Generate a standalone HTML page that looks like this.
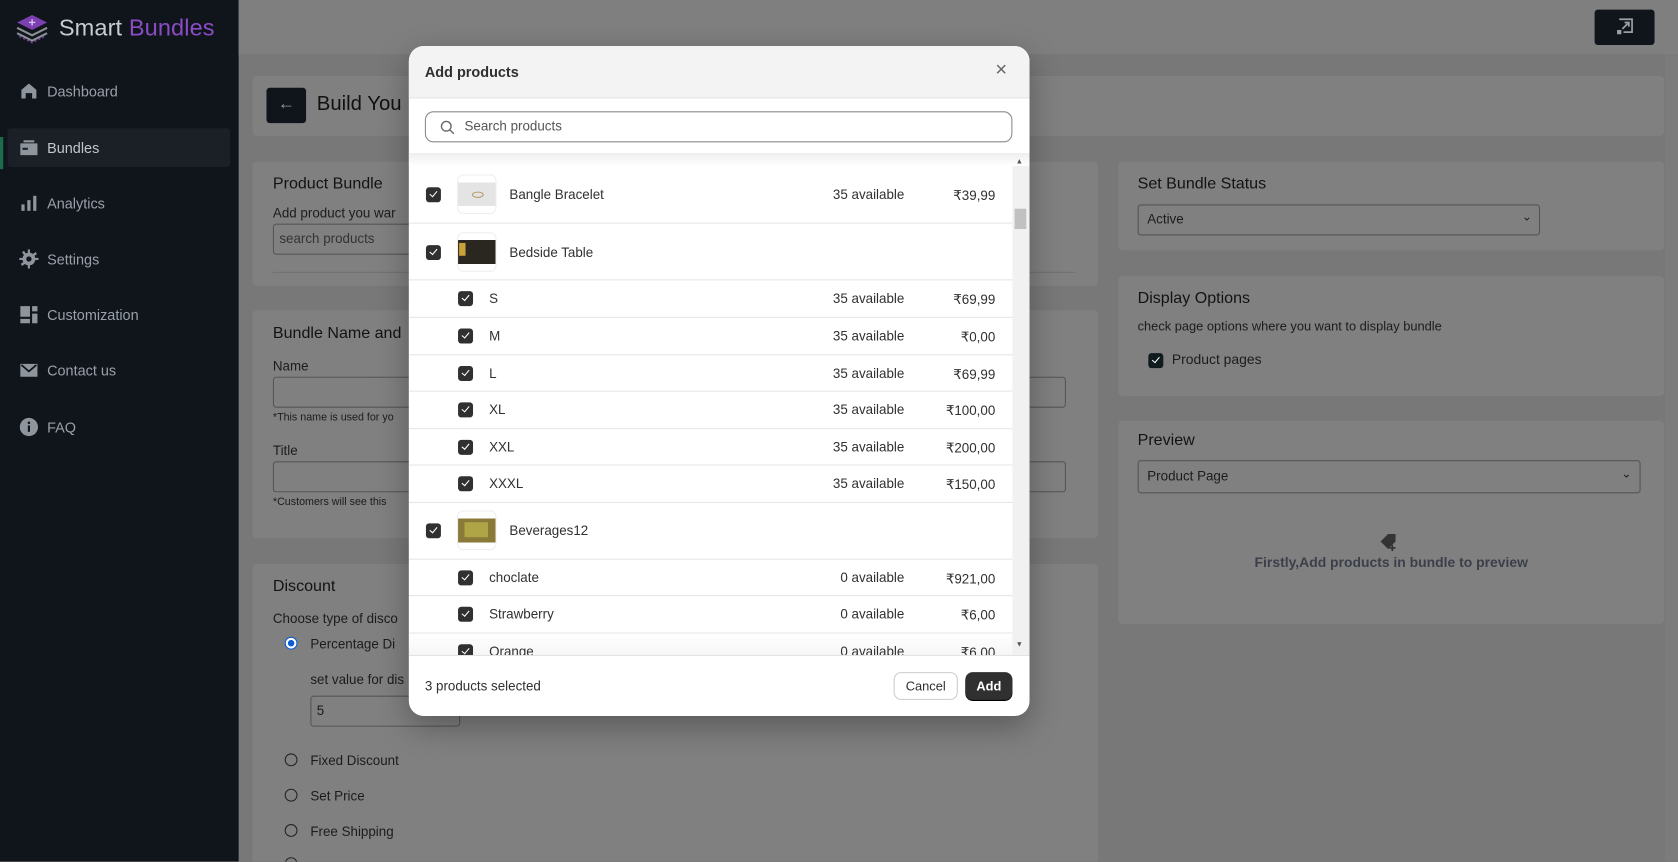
<!DOCTYPE html>
<html><head><meta charset="utf-8"><style>
*{box-sizing:border-box;margin:0;padding:0}
html,body{width:1678px;height:862px;overflow:hidden;background:#787878;font-family:"Liberation Sans",sans-serif}
#w{position:absolute;left:0;top:0;width:1568px;height:805px;overflow:hidden;transform:scale(1.0702);transform-origin:0 0}
.a{position:absolute}
.side{left:0;top:0;width:223px;height:805px;background:#10151c}
.mi{position:absolute;left:18px;color:#9aa0a8;font-size:13.5px;display:flex;align-items:center;gap:8px}
.mi svg{width:18px;height:18px;fill:#8f959c}
.card{position:absolute;background:#808080;border-radius:4px}
.h{position:absolute;color:#131313;font-size:15px}
.t{position:absolute;color:#1c1c1c;font-size:12.5px}
.inp{position:absolute;border:1px solid #555;border-radius:3px}
.modal{left:382px;top:43px;width:580px;height:626px;background:#fff;border-radius:14px;overflow:hidden;box-shadow:0 10px 30px rgba(0,0,0,.3)}
.row{position:absolute;left:0;width:564px;border-bottom:1px solid #e6e6e6;font-size:12.5px;color:#303030}
.cb{position:absolute;width:14px;height:14px;background:#303030;border-radius:3px}
.cb:after{content:"";position:absolute;left:4.5px;top:2px;width:3px;height:6px;border:solid #fff;border-width:0 1.5px 1.5px 0;transform:rotate(40deg)}
.av{position:absolute;right:101px;text-align:right}
.pr{position:absolute;right:16px;text-align:right}
.th{position:absolute;left:45px;width:37px;height:37px;border:1px solid #eee;border-radius:6px;overflow:hidden}
.nm{position:absolute}
.radio{position:absolute;width:12px;height:12px;border:1px solid #222;border-radius:50%}
</style></head><body><div id="w">
<div class="a side"></div>
<svg class="a" style="left:13px;top:12px" width="34" height="30" viewBox="0 0 34 30"><path d="M17 2L31 9 17 16 3 9Z" fill="#7b3fb0"/><path d="M17 6v6M14 9h6" stroke="#d9c3ee" stroke-width="1.3"/><path d="M3 14l14 7 14-7M3 19l14 7 14-7" stroke="#8a8f96" stroke-width="2" fill="none"/><path d="M5 22l12 6 12-6" stroke="#7b3fb0" stroke-width="1.2" stroke-dasharray="2 2" fill="none"/></svg>
<div class="a" style="left:55px;top:13px;font-size:22px;color:#c8ccd0;letter-spacing:.1px">Smart <span style="color:#8a4cc4">Bundles</span></div>
<div class="a" style="left:7px;top:120px;width:208px;height:36px;background:#1b2026;border-radius:3px"></div>
<div class="a" style="left:0;top:128px;width:3px;height:30px;background:#1e6b4a"></div>
<div class="mi" style="top:76px"><svg viewBox="0 0 18 18"><path d="M2 8L9 2l7 6v8h-4v-5H6v5H2z"/></svg>Dashboard</div>
<div class="mi" style="top:129px"><svg viewBox="0 0 18 18"><path d="M4 2h10v2H4zM1 5h16v11H1zM3 9h5v2H3z" fill-rule="evenodd"/></svg><span style="color:#c2c6cb">Bundles</span></div>
<div class="mi" style="top:181px"><svg viewBox="0 0 18 18"><rect x="2" y="10" width="3" height="6"/><rect x="7.5" y="6" width="3" height="10"/><rect x="13" y="2" width="3" height="14"/></svg>Analytics</div>
<div class="mi" style="top:233px"><svg viewBox="0 0 18 18"><circle cx="9" cy="9" r="6"/><path d="M8 0h2v4H8zM8 14h2v4H8zM0 8h4v2H0zM14 8h4v2h-4zM2.5 2.5l2-1 2 3-2 1zM13.5 13.5l-2 1-2-3 2-1zM2.5 15.5l-1-2 3-2 1 2zM15.5 2.5l1 2-3 2-1-2z"/><circle cx="9" cy="9" r="2.5" fill="#10151c"/></svg>Settings</div>
<div class="mi" style="top:285px"><svg viewBox="0 0 18 18"><path d="M1 1h9v10H1zM12 1h5v5h-5zM12 8h5v9h-5zM1 13h9v4H1z"/></svg>Customization</div>
<div class="mi" style="top:337px"><svg viewBox="0 0 18 18"><path d="M1 3h16v12H1z"/><path d="M2 4l7 6 7-6" stroke="#10151c" stroke-width="1.6" fill="none"/></svg>Contact us</div>
<div class="mi" style="top:390px"><svg viewBox="0 0 18 18"><circle cx="9" cy="9" r="8.5"/><rect x="8" y="7.5" width="2" height="6" fill="#10151c"/><circle cx="9" cy="5" r="1.2" fill="#10151c"/></svg>FAQ</div>

<div class="a" style="left:223px;top:0;width:1345px;height:52px;background:#7f7f7f;border-bottom:1px solid #767676"></div>
<div class="a" style="left:1490px;top:9px;width:56px;height:33px;background:#10151c;border-radius:3px"></div>
<svg class="a" style="left:1509px;top:16px" width="18" height="18" viewBox="0 0 18 18"><path d="M4 2h12v12H8" stroke="#9aa0a6" stroke-width="1.6" fill="none"/><path d="M7 11l6-6M9 5h4v4" stroke="#9aa0a6" stroke-width="1.6" fill="none"/><rect x="2" y="12" width="4" height="4" fill="#9aa0a6"/></svg>
<div class="a" style="left:1556px;top:52px;width:12px;height:753px;background:#7c7c7c"></div>

<div class="card" style="left:236px;top:71px;width:1319px;height:56px"></div>
<div class="a" style="left:249px;top:82px;width:37px;height:33px;background:#10151c;border-radius:3px;color:#999;font-size:16px;text-align:center;line-height:31px">←</div>
<div class="a" style="left:296px;top:87px;font-size:19px;color:#111">Build You</div>

<div class="card" style="left:236px;top:151px;width:790px;height:116px"></div>
<div class="h" style="left:255px;top:163px">Product Bundle</div>
<div class="t" style="left:255px;top:192px">Add product you war</div>
<div class="inp" style="left:255px;top:209px;width:200px;height:29px"></div>
<div class="t" style="left:261px;top:216px;color:#333">search products</div>
<div class="a" style="left:255px;top:254px;width:750px;height:1px;background:#707070"></div>

<div class="card" style="left:236px;top:290px;width:790px;height:213px"></div>
<div class="h" style="left:255px;top:303px">Bundle Name and</div>
<div class="t" style="left:255px;top:335px">Name</div>
<div class="inp" style="left:255px;top:352px;width:741px;height:29px"></div>
<div class="t" style="left:255px;top:385px;font-size:10px">*This name is used for yo</div>
<div class="t" style="left:255px;top:414px">Title</div>
<div class="inp" style="left:255px;top:431px;width:741px;height:29px"></div>
<div class="t" style="left:255px;top:464px;font-size:10px">*Customers will see this</div>

<div class="card" style="left:236px;top:527px;width:790px;height:300px"></div>
<div class="h" style="left:255px;top:539px">Discount</div>
<div class="t" style="left:255px;top:571px">Choose type of disco</div>
<div class="radio" style="left:266px;top:595px;border-color:#0b5cd6;background:radial-gradient(#0b5cd6 40%,#fff 45%)"></div>
<div class="t" style="left:290px;top:595px">Percentage Di</div>
<div class="t" style="left:290px;top:628px">set value for dis</div>
<div class="inp" style="left:290px;top:650px;width:140px;height:29px"></div>
<div class="t" style="left:296px;top:657px">5</div>
<div class="radio" style="left:266px;top:704px"></div><div class="t" style="left:290px;top:704px">Fixed Discount</div>
<div class="radio" style="left:266px;top:737px"></div><div class="t" style="left:290px;top:737px">Set Price</div>
<div class="radio" style="left:266px;top:770px"></div><div class="t" style="left:290px;top:770px">Free Shipping</div>
<div class="radio" style="left:266px;top:801px"></div>

<div class="card" style="left:1045px;top:151px;width:510px;height:83px"></div>
<div class="h" style="left:1063px;top:163px">Set Bundle Status</div>
<div class="inp" style="left:1063px;top:191px;width:376px;height:29px"></div>
<div class="t" style="left:1072px;top:198px">Active</div>
<div class="t" style="left:1422px;top:196px;font-size:11px">⌄</div>
<div class="card" style="left:1045px;top:258px;width:510px;height:112px"></div>
<div class="h" style="left:1063px;top:270px">Display Options</div>
<div class="t" style="left:1063px;top:298px;font-size:12px">check page options where you want to display bundle</div>
<div class="cb" style="left:1073px;top:330px;background:#0f1b1c"></div>
<div class="t" style="left:1095px;top:328px;font-size:13px">Product pages</div>
<div class="card" style="left:1045px;top:393px;width:510px;height:190px"></div>
<div class="h" style="left:1063px;top:403px">Preview</div>
<div class="inp" style="left:1063px;top:430px;width:470px;height:31px"></div>
<div class="t" style="left:1072px;top:438px">Product Page</div>
<div class="t" style="left:1515px;top:436px;font-size:11px">⌄</div>
<svg class="a" style="left:1288px;top:498px" width="20" height="18" viewBox="0 0 20 18"><path d="M2 8l7-7h7v7l-7 7z" fill="#333"/><path d="M13 11v6M10 14h6" stroke="#333" stroke-width="1.6"/></svg>
<div class="a" style="left:1045px;top:518px;width:510px;text-align:center;font-size:13px;font-weight:bold;color:#3a3f4a">Firstly,Add products in bundle to preview</div>

<div class="a modal">
 <div class="a" style="left:0;top:0;width:580px;height:49px;background:#f3f3f3;border-bottom:1px solid #e3e3e3"></div>
 <div class="a" style="left:15px;top:17px;font-size:13.5px;font-weight:bold;color:#303030">Add products</div>
 <div class="a" style="left:548px;top:12px;font-size:19px;color:#666">×</div>
 <div class="a" style="left:15px;top:61px;width:549px;height:29px;border:1px solid #8a8a8a;border-radius:8px"></div>
 <svg class="a" style="left:29px;top:69px" width="14" height="14" viewBox="0 0 14 14"><circle cx="6" cy="6" r="4.5" stroke="#666" stroke-width="1.3" fill="none"/><path d="M9.5 9.5L13 13" stroke="#666" stroke-width="1.3"/></svg>
 <div class="a" style="left:52px;top:68px;font-size:12.5px;color:#555">Search products</div>
 <div class="a" style="left:0;top:100px;width:580px;height:12px;background:linear-gradient(#eee,#fff)"></div>
 <div class="a" style="left:564px;top:112px;width:16px;height:457px;background:#f1f1f1"></div>
 <div class="a" style="left:566px;top:152px;width:11px;height:19px;background:#c1c1c1"></div>
 <div class="a" style="left:567px;top:105px;font-size:7px;color:#555">▲</div>
 <div class="a" style="left:567px;top:556px;font-size:7px;color:#555">▼</div>
 <div class="a" style="left:0;top:113px;width:564px;height:456px;overflow:hidden">
  <div class="row" style="top:0;height:53px"><div class="cb" style="left:16px;top:19px"></div><div class="th" style="top:7px;background:linear-gradient(#fff 0 18%,#e4e4e4 18% 82%,#fff 82%)"><div style="position:absolute;left:13px;top:15px;width:11px;height:6px;border:1.5px solid #b59b6a;border-radius:50%"></div></div><div class="nm" style="left:94px;top:19px">Bangle Bracelet</div><div class="av" style="top:19px">35 available</div><div class="pr" style="top:19px">₹39,99</div></div>
  <div class="row" style="top:53px;height:53px"><div class="cb" style="left:16px;top:20px"></div><div class="th" style="top:8px;background:linear-gradient(#fff 0 18%,#2a2620 18% 82%,#fff 82%)"><div style="position:absolute;left:1px;top:9px;width:6px;height:12px;background:#c9a23a"></div></div><div class="nm" style="left:94px;top:20px">Bedside Table</div></div>
  <div class="row" style="top:106px;height:35px"><div class="cb" style="left:46px;top:10px"></div><div class="nm" style="left:75px;top:10px">S</div><div class="av" style="top:10px">35 available</div><div class="pr" style="top:10px">₹69,99</div></div>
  <div class="row" style="top:141px;height:35px"><div class="cb" style="left:46px;top:10px"></div><div class="nm" style="left:75px;top:10px">M</div><div class="av" style="top:10px">35 available</div><div class="pr" style="top:10px">₹0,00</div></div>
  <div class="row" style="top:176px;height:34px"><div class="cb" style="left:46px;top:10px"></div><div class="nm" style="left:75px;top:10px">L</div><div class="av" style="top:10px">35 available</div><div class="pr" style="top:10px">₹69,99</div></div>
  <div class="row" style="top:210px;height:35px"><div class="cb" style="left:46px;top:10px"></div><div class="nm" style="left:75px;top:10px">XL</div><div class="av" style="top:10px">35 available</div><div class="pr" style="top:10px">₹100,00</div></div>
  <div class="row" style="top:245px;height:34px"><div class="cb" style="left:46px;top:10px"></div><div class="nm" style="left:75px;top:10px">XXL</div><div class="av" style="top:10px">35 available</div><div class="pr" style="top:10px">₹200,00</div></div>
  <div class="row" style="top:279px;height:35px"><div class="cb" style="left:46px;top:10px"></div><div class="nm" style="left:75px;top:10px">XXXL</div><div class="av" style="top:10px">35 available</div><div class="pr" style="top:10px">₹150,00</div></div>
  <div class="row" style="top:314px;height:53px"><div class="cb" style="left:16px;top:19px"></div><div class="th" style="top:7px;background:linear-gradient(#fff 0 18%,#8a7a3a 18% 82%,#fff 82%)"><div style="position:absolute;left:6px;top:10px;width:22px;height:14px;background:#b9b04a;opacity:.8"></div></div><div class="nm" style="left:94px;top:19px">Beverages12</div></div>
  <div class="row" style="top:367px;height:34px"><div class="cb" style="left:46px;top:10px"></div><div class="nm" style="left:75px;top:10px">choclate</div><div class="av" style="top:10px">0 available</div><div class="pr" style="top:10px">₹921,00</div></div>
  <div class="row" style="top:401px;height:35px"><div class="cb" style="left:46px;top:10px"></div><div class="nm" style="left:75px;top:10px">Strawberry</div><div class="av" style="top:10px">0 available</div><div class="pr" style="top:10px">₹6,00</div></div>
  <div class="row" style="top:436px;height:35px;background:linear-gradient(#fff,#f0f0f0)"><div class="cb" style="left:46px;top:10px"></div><div class="nm" style="left:75px;top:10px">Orange</div><div class="av" style="top:10px">0 available</div><div class="pr" style="top:10px">₹6,00</div></div>
 </div>
 <div class="a" style="left:0;top:569px;width:580px;height:1px;background:#e3e3e3"></div>
 <div class="a" style="left:15px;top:591px;font-size:12.5px;color:#303030">3 products selected</div>
 <div class="a" style="left:453px;top:585px;width:60px;height:26px;border:1px solid #ccc;border-radius:7px;font-size:12px;color:#303030;text-align:center;line-height:24px">Cancel</div>
 <div class="a" style="left:520px;top:585px;width:44px;height:26px;background:#303030;border-radius:7px;font-size:12px;font-weight:bold;color:#fff;text-align:center;line-height:26px;box-shadow:0 1px 0 #000">Add</div>
</div>
</div></body></html>
